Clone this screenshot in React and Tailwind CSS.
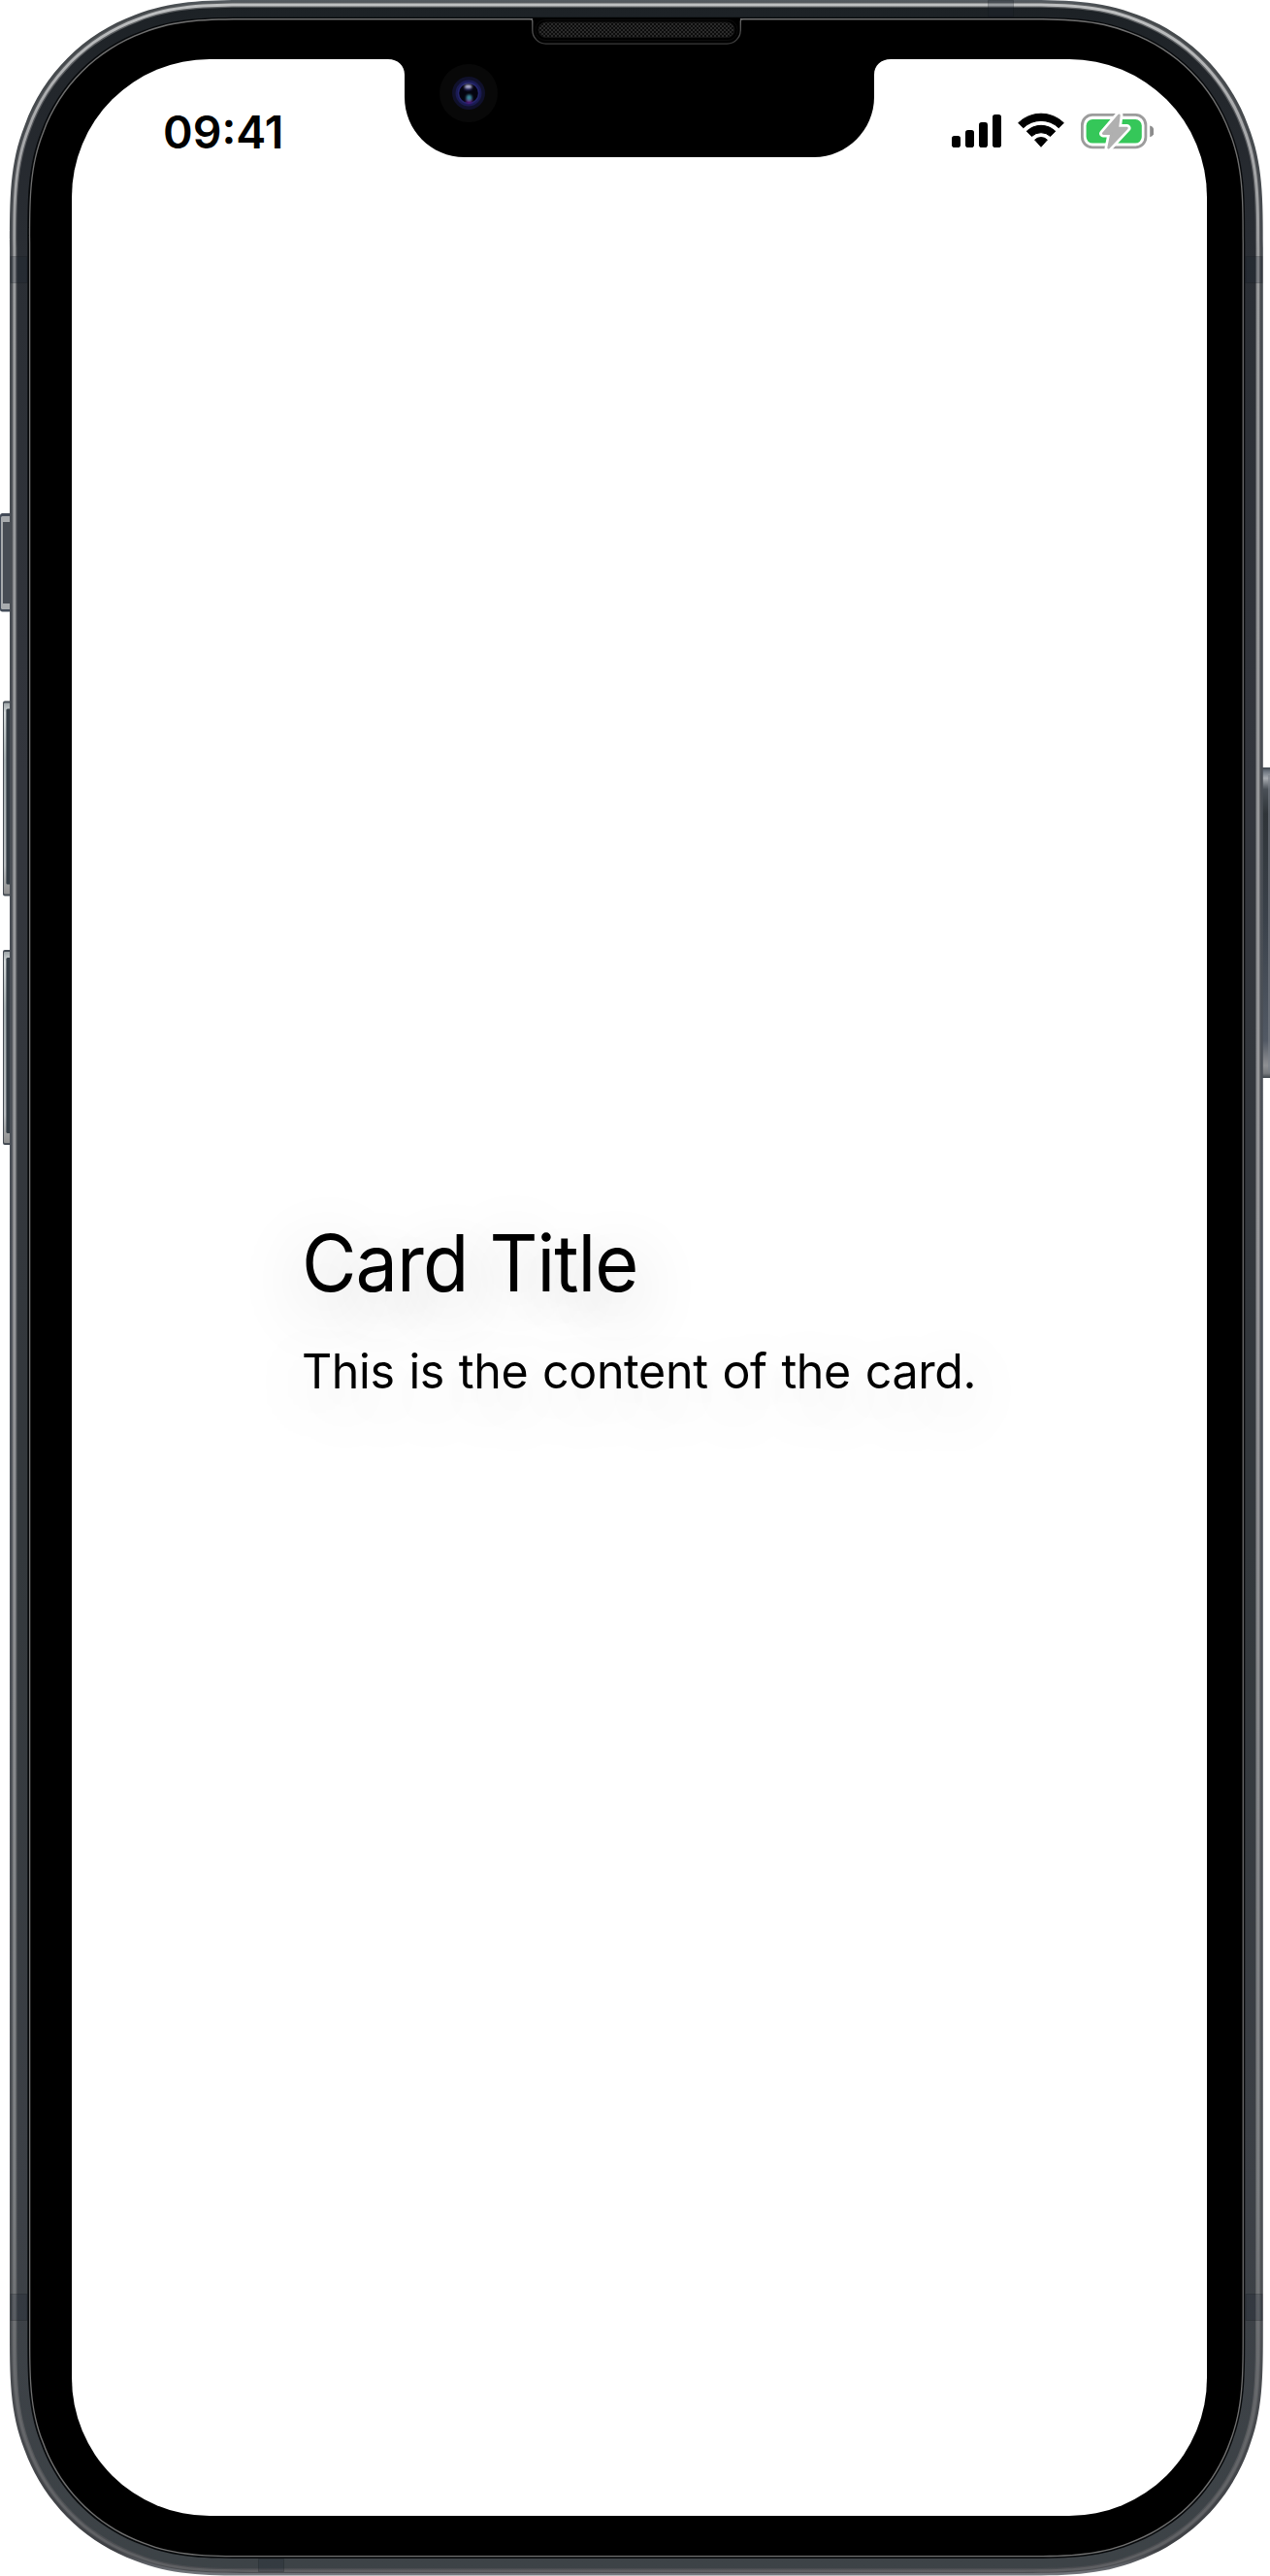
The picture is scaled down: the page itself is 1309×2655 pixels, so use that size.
// Rounded rectangle whose corners ease gradually into the straight sides.
function squircle(x0, y0, x1, y1, r) {
  const a = 1.25 * r, b = 1.0 * r, c = 0.82 * r;
  const d = 0.63149 * r, e = 0.07491 * r, f = 0.37282 * r, g = 0.16906 * r;
  return [
    `M${x0 + a} ${y0}L${x1 - a} ${y0}`,
    `C${x1 - b} ${y0} ${x1 - c} ${y0} ${x1 - d} ${y0 + e}`,
    `C${x1 - f} ${y0 + g} ${x1 - g} ${y0 + f} ${x1 - e} ${y0 + d}`,
    `C${x1} ${y0 + c} ${x1} ${y0 + b} ${x1} ${y0 + a}`,
    `L${x1} ${y1 - a}`,
    `C${x1} ${y1 - b} ${x1} ${y1 - c} ${x1 - e} ${y1 - d}`,
    `C${x1 - g} ${y1 - f} ${x1 - f} ${y1 - g} ${x1 - d} ${y1 - e}`,
    `C${x1 - c} ${y1} ${x1 - b} ${y1} ${x1 - a} ${y1}`,
    `L${x0 + a} ${y1}`,
    `C${x0 + b} ${y1} ${x0 + c} ${y1} ${x0 + d} ${y1 - e}`,
    `C${x0 + f} ${y1 - g} ${x0 + g} ${y1 - f} ${x0 + e} ${y1 - d}`,
    `C${x0} ${y1 - c} ${x0} ${y1 - b} ${x0} ${y1 - a}`,
    `L${x0} ${y0 + a}`,
    `C${x0} ${y0 + b} ${x0} ${y0 + c} ${x0 + e} ${y0 + d}`,
    `C${x0 + g} ${y0 + f} ${x0 + f} ${y0 + g} ${x0 + d} ${y0 + e}`,
    `C${x0 + c} ${y0} ${x0 + b} ${y0} ${x0 + a} ${y0}Z`,
  ].join("");
}

function VGradient({ id, stops }) {
  return (
    <linearGradient id={id} gradientUnits="userSpaceOnUse" x1="0" y1="0" x2="0" y2="2655">
      {stops.map(([o, c]) => (
        <stop key={o} offset={o} stopColor={c} />
      ))}
    </linearGradient>
  );
}

function SideButton({ x, y, w, h }) {
  return (
    <g>
      <rect x={x} y={y} width={w} height={h} rx="2" fill="#454c54" />
      <rect x={x + 1} y={y + 2} width={w} height={h - 4} rx="1" fill="url(#btnEdge)" />
      <rect x={x + 3.4} y={y + 8} width={w} height={h - 20} rx="1.5" fill="#343d45" />
    </g>
  );
}

function Device() {
  return (
    <svg className="absolute inset-0" width="1309" height="2655" viewBox="0 0 1309 2655" aria-hidden="true">
      <defs>
        <VGradient id="edge" stops={[[0, "#565d62"], [0.003, "#45494c"], [0.1, "#474b50"], [0.5, "#4b5058"], [0.9, "#4c4f53"], [0.99, "#3f4145"], [1, "#777a80"]]} />
        <VGradient id="rim" stops={[[0, "#606365"], [0.05, "#54565a"], [0.5, "#64666a"], [0.9, "#5e6164"], [1, "#4a4c50"]]} />
        <VGradient id="shine" stops={[[0, "#bfc1c2"], [0.04, "#abacae"], [0.1, "#9a9c9e"], [0.5, "#96979a"], [0.85, "#7b7e81"], [0.93, "#66686b"], [1, "#5e5f62"]]} />
        <VGradient id="body" stops={[[0, "#1c2125"], [0.03, "#22262b"], [0.1, "#2a2e34"], [0.3, "#33363d"], [0.6, "#33383c"], [0.85, "#3c4046"], [1, "#3d4347"]]} />
        <linearGradient id="btnEdge" x1="0" y1="0" x2="0" y2="1">
          <stop offset="0" stopColor="#9ea5a8" />
          <stop offset="0.05" stopColor="#d5dadb" />
          <stop offset="0.3" stopColor="#a6b0b2" />
          <stop offset="0.85" stopColor="#b9bdc0" />
          <stop offset="1" stopColor="#8f8f8f" />
        </linearGradient>
        <linearGradient id="power" x1="0" y1="0" x2="0" y2="1">
          <stop offset="0" stopColor="#3d444c" />
          <stop offset="0.012" stopColor="#6b737d" />
          <stop offset="0.035" stopColor="#a9adb2" />
          <stop offset="0.07" stopColor="#4a5057" />
          <stop offset="0.15" stopColor="#2f3438" />
          <stop offset="0.5" stopColor="#3b424b" />
          <stop offset="0.88" stopColor="#525964" />
          <stop offset="0.96" stopColor="#8f9093" />
          <stop offset="0.985" stopColor="#777a7e" />
          <stop offset="1" stopColor="#3f454b" />
        </linearGradient>
        <linearGradient id="speaker" gradientUnits="userSpaceOnUse" x1="0" y1="19" x2="0" y2="46">
          <stop offset="0" stopColor="#6a6a6a" />
          <stop offset="0.6" stopColor="#4a4a4a" />
          <stop offset="1" stopColor="#3a3a3a" />
        </linearGradient>
        <pattern id="mesh" width="4" height="4" patternUnits="userSpaceOnUse">
          <rect width="4" height="4" fill="#0c0c0c" />
          <rect width="2" height="2" fill="#2b2b2b" />
          <rect x="2" y="2" width="2" height="2" fill="#2b2b2b" />
        </pattern>
        <filter id="soft" x="-100%" y="-100%" width="300%" height="300%">
          <feGaussianBlur stdDeviation="1.1" />
        </filter>
      </defs>

      {/* Side buttons */}
      <rect x="0" y="529" width="12" height="101.5" rx="2.5" fill="#434b58" />
      <rect x="1" y="532" width="11" height="96" rx="1.5" fill="#a8abae" />
      <rect x="3" y="538" width="9" height="84" fill="#474c54" />
      <SideButton x={3} y={722.5} w={9} h={201} />
      <SideButton x={3} y={979} w={9} h={201} />
      <rect x="1300" y="791" width="9" height="320" fill="url(#power)" />
      <rect x="1307" y="799" width="2" height="306" fill="#7b8188" opacity="0.6" />

      {/* Metal band, from the outside in */}
      <path d={squircle(10, 0, 1301.8, 2654.6, 205)} fill="url(#edge)" />
      <path d={squircle(12.4, 2.6, 1299.2, 2652, 203)} fill="url(#rim)" />
      <path d={squircle(13.4, 3.5, 1298.2, 2651, 202)} fill="url(#shine)" />
      <path d={squircle(16.2, 6.6, 1295.2, 2648.4, 199)} fill="url(#rim)" />
      <path d={squircle(17.4, 7.8, 1294, 2647, 198)} fill="url(#body)" />
      <path d={squircle(28.3, 17.7, 1283.3, 2637, 187)} fill="#07090b" />
      <path d={squircle(30, 19, 1281.9, 2635.3, 185.5)} fill="#6f6f6f" />
      <path d={squircle(31.3, 20.4, 1280.6, 2634, 184.5)} fill="#000" />

      {/* Antenna bands */}
      <g fill="#18222c" fillOpacity="0.24" stroke="#0c1116" strokeOpacity="0.2">
        <rect x="11" y="264.5" width="17" height="27" />
        <rect x="1284" y="264.5" width="17" height="27" />
        <rect x="11" y="2364.5" width="17" height="27" />
        <rect x="1284" y="2364.5" width="17" height="27" />
        <rect x="1018.5" y="0.5" width="26" height="16.5" />
        <rect x="266.5" y="2637.5" width="26" height="13" />
      </g>

      {/* Earpiece */}
      <path d="M549 18.2H763V30A14.5 14.5 0 0 1 748.5 45H563.5A14.5 14.5 0 0 1 549 30Z" fill="#000" />
      <path d="M546 19.7H547Q548.8 19.7 548.8 22V31A14 14 0 0 0 562.5 45.1H749.5A14 14 0 0 0 763.3 31V22Q763.3 19.7 765 19.7H766" fill="none" stroke="url(#speaker)" strokeWidth="1.3" />
      <rect x="552" y="20.5" width="208" height="21" rx="10" fill="none" stroke="#0c0c0c" />
      <rect x="555" y="23" width="202" height="15.6" rx="7.8" fill="url(#mesh)" stroke="#161616" />

      {/* Display */}
      <rect x="74" y="61" width="1170" height="2532" rx="142" fill="#fff" />
      <path d="M400 60V61C410 61 417 67.5 417 77V100C417 134 444 162 479 162H839C873 162 901 134 901 100V77C901 67.5 908 61 918 61V60Z" fill="#000" />

      {/* Camera */}
      <circle cx="483" cy="96" r="30" fill="#080808" />
      <circle cx="483" cy="96" r="17" fill="#10112b" />
      <circle cx="483" cy="96" r="13.5" fill="#1a1b52" />
      <circle cx="483" cy="96" r="11.3" fill="#24256c" />
      <circle cx="483" cy="96" r="9.8" fill="#04040f" />
      <g filter="url(#soft)">
        <circle cx="483.5" cy="103.5" r="3.2" fill="#5c187c" />
        <circle cx="483.5" cy="100.5" r="3" fill="#3a8498" />
        <ellipse cx="482.5" cy="91" rx="4" ry="2" fill="#30306e" />
        <ellipse cx="482.7" cy="88.8" rx="3.8" ry="1.6" fill="#c4c4e4" />
      </g>
    </svg>
  );
}

function Signal() {
  return (
    <svg width="51" height="34" viewBox="0 0 51 34" aria-hidden="true">
      <rect x="0" y="22" width="9" height="12" rx="2.8" />
      <rect x="14" y="16" width="9" height="18" rx="2.8" />
      <rect x="28" y="8" width="9" height="26" rx="2.8" />
      <rect x="42" y="0" width="9" height="34" rx="2.8" />
    </svg>
  );
}

function Wifi() {
  return (
    <svg width="48" height="36" viewBox="0 0 48 36" stroke="#000" strokeWidth="1" strokeLinejoin="round" aria-hidden="true">
      <path d="M.6 10.7A33.5 33.5 0 0 1 47.4 10.7L42.3 15.8A26.3 26.3 0 0 0 5.7 15.8Z" />
      <path d="M9.2 19.3A21.3 21.3 0 0 1 38.8 19.3L33.6 24.5A14 14 0 0 0 14.4 24.5Z" />
      <path d="M17.6 28.1A9.5 9.5 0 0 1 30.4 28.1L24 35.3Z" />
    </svg>
  );
}

function Battery() {
  const bolt = "M39.4 1.9L23.2 20.6H31.6L28.6 35.2L47.4 15H37.8Z";
  return (
    <svg width="75" height="37" viewBox="0 0 75 37" aria-hidden="true">
      <rect x="1.4" y="1.4" width="65.5" height="33.4" rx="10.5" fill="none" stroke="#9c9c9c" strokeWidth="2.8" />
      <rect x="5.6" y="6" width="57.2" height="24.6" rx="6.5" fill="#35c759" />
      <path d="M71.2 12.6A6 6 0 0 1 71.2 24.2Z" fill="#8c8c8c" />
      <path d={bolt} fill="#fff" stroke="#fff" strokeWidth="8" strokeLinejoin="round" />
      <path d={bolt} fill="#b0b0b0" stroke="#b0b0b0" strokeWidth="2.6" strokeLinejoin="round" />
    </svg>
  );
}

export default function App() {
  return (
    <div className="relative h-[2655px] w-[1309px] overflow-hidden bg-white font-['Inter',sans-serif] text-black">
      <Device />
      <main className="relative ml-[74px] flex h-[2593px] w-[1170px] flex-col pt-[61px]">
        <header className="flex h-[141px] shrink-0 items-start justify-between pr-[55px] pl-[94px]">
          <time className="mt-[47px] text-[46.5px] leading-[56px] font-semibold">09:41</time>
          <div className="mt-[55px] flex items-start">
            <div className="mt-[2px]"><Signal /></div>
            <div className="ml-[17px]"><Wifi /></div>
            <div className="mt-px ml-[17px]"><Battery /></div>
          </div>
        </header>
        <section className="mt-[1050px] flex flex-col items-start gap-[31px] pl-[237px] whitespace-nowrap [text-shadow:0_18px_72px_rgba(0,0,0,0.3)]">
          <h1 className="origin-left scale-x-[0.95] text-[81.5px] leading-[100px] tracking-[-1.05px] [word-spacing:1.5px]">Card Title</h1>
          <p className="origin-left scale-x-[0.98] text-[49.3px] leading-[60px] tracking-[-0.35px] [word-spacing:1.6px]">This is the content of the card.</p>
        </section>
      </main>
    </div>
  );
}
